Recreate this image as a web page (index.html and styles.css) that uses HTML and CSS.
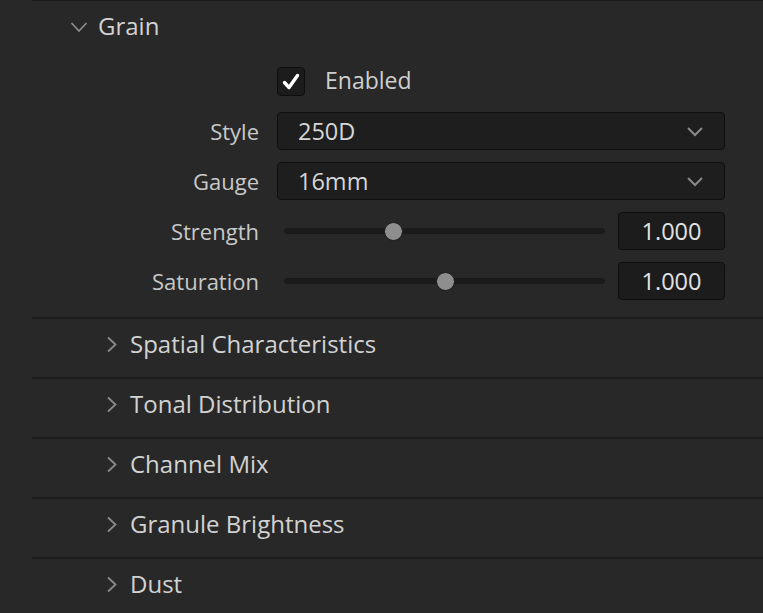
FILE: index.html
```html
<!DOCTYPE html>
<html>
<head>
<meta charset="utf-8">
<link rel="stylesheet" href="styles.css">
</head>
<body>
<div class="panel">
  <div class="topline"></div>
  <div class="group-header">
    <svg class="chev-down" width="18" height="12" viewBox="0 0 18 12"><path d="M1.5 2 L9 10 L16.5 2" fill="none" stroke="#8a8a8a" stroke-width="1.8"/></svg>
    <span class="group-title">Grain</span>
  </div>
  <div class="form">
    <div class="check-row">
      <span class="checkbox">
        <svg width="20" height="20" viewBox="0 0 20 20"><path d="M3.5 10.5 L8 15.5 L16.5 3.5" fill="none" stroke="#ffffff" stroke-width="3.4" stroke-linecap="round" stroke-linejoin="round"/></svg>
      </span>
      <span class="check-label">Enabled</span>
    </div>
    <div class="grid">
      <div class="label">Style</div>
      <div class="select"><span>250D</span><svg width="18" height="11" viewBox="0 0 18 11"><path d="M2 2 L9 9 L16 2" fill="none" stroke="#8a8a8a" stroke-width="2"/></svg></div>
      <div class="label">Gauge</div>
      <div class="select"><span>16mm</span><svg width="18" height="11" viewBox="0 0 18 11"><path d="M2 2 L9 9 L16 2" fill="none" stroke="#8a8a8a" stroke-width="2"/></svg></div>
      <div class="label">Strength</div>
      <div class="slider-row">
        <div class="track"><span class="thumb" style="left: 34%"></span></div>
        <div class="numbox">1.000</div>
      </div>
      <div class="label">Saturation</div>
      <div class="slider-row">
        <div class="track"><span class="thumb" style="left: 50%"></span></div>
        <div class="numbox">1.000</div>
      </div>
    </div>
  </div>
  <div class="section"><svg class="chev-right" width="13" height="17" viewBox="0 0 13 17"><path d="M3 1.5 L10.5 8.5 L3 15.5" fill="none" stroke="#8a8a8a" stroke-width="1.8"/></svg><span class="section-title">Spatial Characteristics</span></div>
  <div class="section"><svg class="chev-right" width="13" height="17" viewBox="0 0 13 17"><path d="M3 1.5 L10.5 8.5 L3 15.5" fill="none" stroke="#8a8a8a" stroke-width="1.8"/></svg><span class="section-title">Tonal Distribution</span></div>
  <div class="section"><svg class="chev-right" width="13" height="17" viewBox="0 0 13 17"><path d="M3 1.5 L10.5 8.5 L3 15.5" fill="none" stroke="#8a8a8a" stroke-width="1.8"/></svg><span class="section-title">Channel Mix</span></div>
  <div class="section"><svg class="chev-right" width="13" height="17" viewBox="0 0 13 17"><path d="M3 1.5 L10.5 8.5 L3 15.5" fill="none" stroke="#8a8a8a" stroke-width="1.8"/></svg><span class="section-title">Granule Brightness</span></div>
  <div class="section"><svg class="chev-right" width="13" height="17" viewBox="0 0 13 17"><path d="M3 1.5 L10.5 8.5 L3 15.5" fill="none" stroke="#8a8a8a" stroke-width="1.8"/></svg><span class="section-title">Dust</span></div>
</div>
</body>
</html>
```

FILE: styles.css
```css
html, body {
  margin: 0;
  padding: 0;
  background: #282828;
  height: 100%;
  overflow: hidden;
}
.panel {
  font-family: "Open Sans", "Noto Sans", sans-serif;
  color: #cfcfcf;
}
.topline {
  margin-left: 32px;
  height: 1px;
  background: #1a1a1a;
}
.group-header {
  box-sizing: border-box;
  height: 52px;
  display: flex;
  align-items: center;
  padding-left: 70px;
  padding-bottom: 3px;
}
.chev-down {
  display: block;
  margin-top: 2px;
}
.group-title {
  margin-left: 10px;
  font-size: 24px;
  line-height: 1;
  color: #d2d2d2;
}
.form {
  padding-top: 14px;
  padding-bottom: 17px;
}
.check-row {
  display: flex;
  align-items: center;
  margin-left: 277px;
  height: 29px;
  margin-bottom: 16px;
}
.checkbox {
  width: 26px;
  height: 27px;
  border: 1px solid #0e0e0e;
  border-radius: 4px;
  background: #1c1c1c;
  display: flex;
  align-items: center;
  justify-content: center;
}
.check-label {
  margin-left: 20px;
  font-size: 23px;
  line-height: 1;
  padding-bottom: 3px;
}
.grid {
  display: grid;
  grid-template-columns: 260px 448px;
  grid-auto-rows: 38px;
  column-gap: 17px;
  row-gap: 12px;
}
.label {
  text-align: right;
  font-size: 22px;
  display: flex;
  align-items: center;
  justify-content: flex-end;
  color: #c8c8c8;
  padding-right: 1px;
}
.select {
  box-sizing: border-box;
  border: 1px solid #0e0e0e;
  border-radius: 4px;
  background: #1e1e1e;
  display: flex;
  align-items: center;
  justify-content: space-between;
  padding: 0 20px 0 20px;
  font-size: 23.5px;
  color: #d6d6d6;
}
.slider-row {
  display: flex;
  align-items: center;
}
.track {
  position: relative;
  flex: 1;
  margin-left: 7px;
  margin-right: 13px;
  height: 6px;
  border-radius: 3px;
  background: #1b1b1b;
}
.thumb {
  position: absolute;
  top: 50%;
  width: 17px;
  height: 17px;
  margin-left: -9px;
  margin-top: -9.5px;
  border-radius: 50%;
  background: #8e8e8e;
  border: 1px solid #1c1c1c;
}
.numbox {
  box-sizing: border-box;
  width: 107px;
  height: 38px;
  border: 1px solid #0e0e0e;
  border-radius: 4px;
  background: #1c1c1c;
  display: flex;
  align-items: center;
  justify-content: center;
  font-size: 23.5px;
  color: #e2e2e2;
}
.section {
  box-sizing: border-box;
  margin-left: 32px;
  border-top: 2px solid #1c1c1c;
  height: 60px;
  display: flex;
  align-items: center;
  padding-left: 73px;
  padding-bottom: 9px;
}
.chev-right {
  display: block;
  margin-top: 2px;
}
.section-title {
  margin-left: 12px;
  font-size: 24px;
  line-height: 1;
  color: #d2d2d2;
}
```
